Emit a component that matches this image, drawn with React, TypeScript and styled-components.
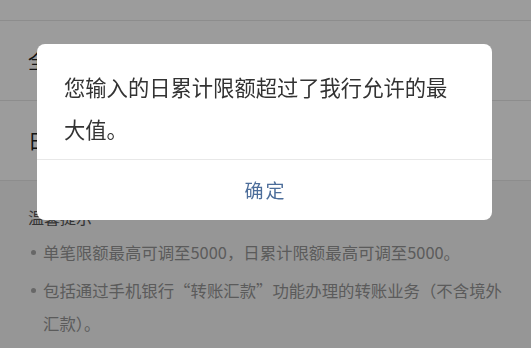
import styled, { createGlobalStyle } from 'styled-components';

const GlobalStyle = createGlobalStyle`
  html, body {
    margin: 0;
    padding: 0;
    background: #f5f5f5;
    font-family: "Noto Sans CJK SC", "Noto Sans", sans-serif;
  }
`;

const Page = styled.div`
  width: 531px;
  height: 348px;
  overflow: hidden;
  background: #f5f5f5;
`;

const Row = styled.div<{ $height: number }>`
  height: ${(p) => p.$height}px;
  background: #fff;
  border-bottom: 1px solid #e6e6e6;
  display: flex;
  align-items: center;
  padding-left: 28px;
  font-size: 20px;
  color: #222;
`;

const Tips = styled.div`
  padding: 26px 20px 0 28px;
`;

const TipsTitle = styled.div`
  font-size: 16px;
  line-height: 20px;
  color: #555;
  margin-bottom: 9px;
`;

const TipList = styled.ul`
  list-style: none;
  margin: 0;
  padding: 0;
`;

const Tip = styled.li`
  position: relative;
  padding-left: 15px;
  font-size: 16.4px;
  line-height: 33px;
  color: #969696;
  margin-bottom: 5px;

  &::before {
    content: '';
    position: absolute;
    left: 3px;
    top: 14px;
    width: 5px;
    height: 5px;
    border-radius: 50%;
    background: #a8a8a8;
  }
`;

const Overlay = styled.div`
  position: fixed;
  inset: 0;
  background: rgba(0, 0, 0, 0.39);
  padding: 44px 0 0 37px;
`;

const Dialog = styled.div`
  width: 455px;
  background: #fff;
  border-radius: 8px;
  overflow: hidden;
`;

const Message = styled.div`
  padding: 22px 34px 9px 27px;
  font-size: 21.3px;
  line-height: 42px;
  color: #333;
`;

const Actions = styled.div`
  border-top: 1px solid #e8e8e8;
  height: 60px;
  display: flex;
`;

const ActionButton = styled.button`
  flex: 1;
  border: none;
  background: none;
  font-family: inherit;
  font-size: 19px;
  letter-spacing: 2px;
  color: #4c6d9a;
  padding: 0 0 2px 2px;
`;

export default function App() {
  return (
    <>
      <GlobalStyle />
      <Page>
        <Row $height={20} />
        <Row $height={79}>全部限额</Row>
        <Row $height={79}>日累计限额</Row>
        <Tips>
          <TipsTitle>温馨提示</TipsTitle>
          <TipList>
            <Tip>单笔限额最高可调至5000，日累计限额最高可调至5000。</Tip>
            <Tip>包括通过手机银行“转账汇款”功能办理的转账业务（不含境外汇款）。</Tip>
          </TipList>
        </Tips>
      </Page>
      <Overlay>
        <Dialog>
          <Message>您输入的日累计限额超过了我行允许的最大值。</Message>
          <Actions>
            <ActionButton>确定</ActionButton>
          </Actions>
        </Dialog>
      </Overlay>
    </>
  );
}
